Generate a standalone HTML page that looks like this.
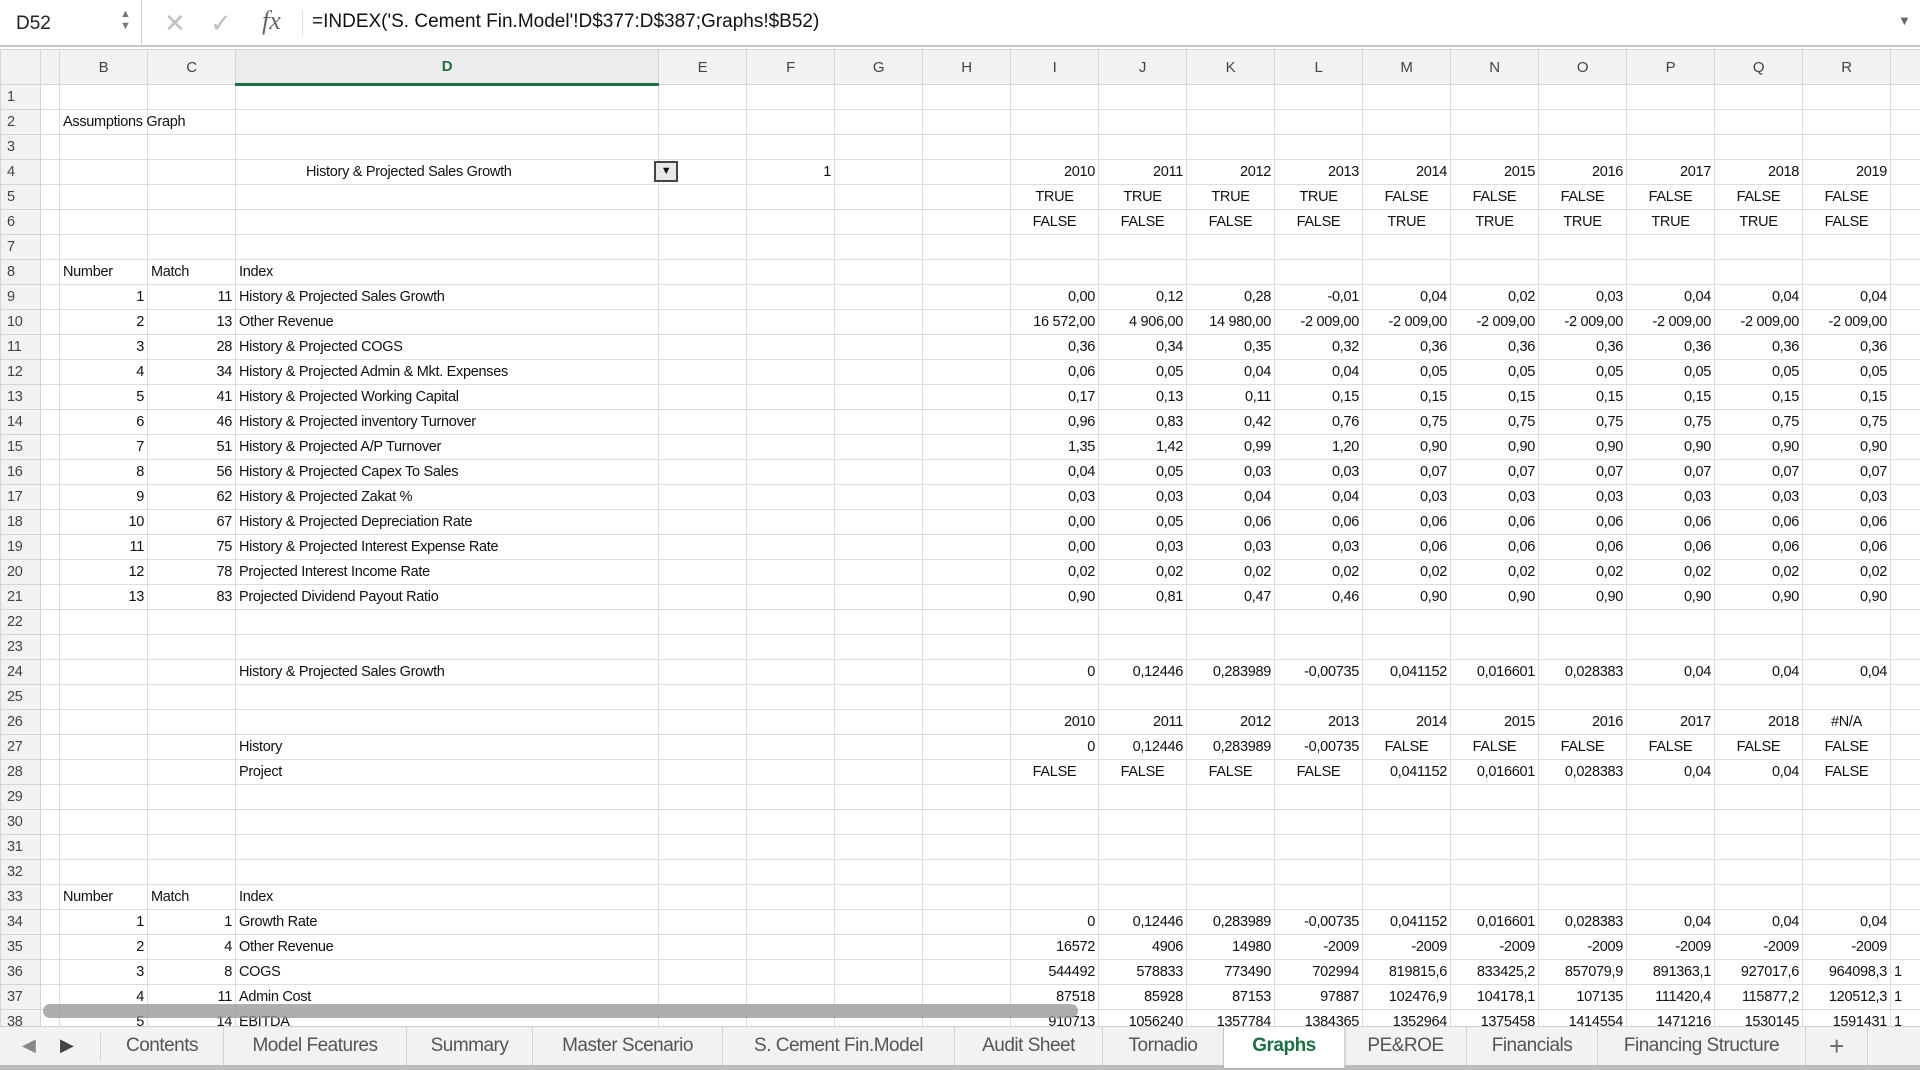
<!DOCTYPE html>
<html><head><meta charset="utf-8"><style>
*{box-sizing:border-box;margin:0;padding:0}
body{width:1920px;height:1070px;overflow:hidden;background:#fff;font-family:"Liberation Sans",sans-serif;position:relative}
#fb{position:absolute;left:0;top:0;width:1920px;height:47px;background:#fff;border-bottom:2px solid #c8c8c8}
#nb{position:absolute;left:0;top:0;width:142px;height:46px;border-right:1px solid #d0d0d0;font-size:19px;color:#222;padding:13px 0 0 16px}
#grid{position:absolute;left:0;top:49px;width:1920px;height:977px;overflow:hidden;background:#fff}
table{border-collapse:collapse;table-layout:fixed;width:1930px;font-size:14.5px;color:#111;letter-spacing:-0.3px}
td,th{height:25px;border:1px solid #dcdcdc;padding:0 3px;white-space:nowrap;overflow:visible;font-weight:normal;text-align:right}
thead th{height:35px;background:#f2f2f2;color:#444;text-align:center;font-size:15px;border-color:#d4d4d4}
tbody th{background:#f2f2f2;color:#444;text-align:left;padding-left:6px;border-color:#d4d4d4}
td.l{text-align:left}td.c{text-align:center}
thead th.sel{color:#1d7044;font-weight:bold;border-bottom:3px solid #1d7044;background:#ececec}
#tabs{position:absolute;left:0;top:1026px;width:1920px;height:44px;background:#f2f2f2;border-top:1px solid #cfcfcf;border-bottom:5px solid #bdbdbd}
.tab{position:absolute;top:0;height:38px;font-size:19px;color:#555;text-align:center;line-height:38px;border-right:1px solid #d3d3d3;letter-spacing:-0.5px}
.tab.act{background:#fff;color:#1d7044;font-weight:bold;height:41px;box-shadow:0 1px 2px #aaa}
#sb{position:absolute;left:43px;top:1004px;width:1035px;height:14px;border-radius:7px;background:#9a9a9a;opacity:.8}
</style></head><body>
<div id="fb">
<div id="nb">D52</div>
<div style="position:absolute;left:120px;top:8px;font-size:11px;color:#777;line-height:12px">▲<br>▼</div>
<div style="position:absolute;left:164px;top:8px;font-size:26px;color:#c0c0c0">✕</div>
<div style="position:absolute;left:210px;top:8px;font-size:26px;color:#c0c0c0">✓</div>
<div style="position:absolute;left:262px;top:6px;font-size:26px;color:#666;font-family:'Liberation Serif',serif;font-style:italic">fx</div>
<div style="position:absolute;left:302px;top:10px;height:26px;border-left:1px solid #ddd"></div>
<div style="position:absolute;left:312px;top:11px;font-size:19px;color:#111">=INDEX('S. Cement Fin.Model'!D$377:D$387;Graphs!$B52)</div>
<div style="position:absolute;left:1898px;top:13px;font-size:13px;color:#666">▼</div>
</div>
<div id="grid">
<table>
<colgroup><col style="width:40px"><col style="width:19px"><col style="width:88px"><col style="width:88px"><col style="width:423px"><col style="width:88px"><col style="width:88px"><col style="width:88px"><col style="width:88px"><col style="width:88px"><col style="width:88px"><col style="width:88px"><col style="width:88px"><col style="width:88px"><col style="width:88px"><col style="width:88px"><col style="width:88px"><col style="width:88px"><col style="width:88px"><col style="width:40px"></colgroup>
<thead><tr><th></th><th></th><th>B</th><th>C</th><th class="sel">D</th><th>E</th><th>F</th><th>G</th><th>H</th><th>I</th><th>J</th><th>K</th><th>L</th><th>M</th><th>N</th><th>O</th><th>P</th><th>Q</th><th>R</th><th></th></tr></thead>
<tbody>
<tr><th>1</th><td></td><td></td><td></td><td></td><td></td><td></td><td></td><td></td><td></td><td></td><td></td><td></td><td></td><td></td><td></td><td></td><td></td><td></td><td></td></tr>
<tr><th>2</th><td></td><td class="l">Assumptions Graph</td><td></td><td></td><td></td><td></td><td></td><td></td><td></td><td></td><td></td><td></td><td></td><td></td><td></td><td></td><td></td><td></td><td></td></tr>
<tr><th>3</th><td></td><td></td><td></td><td></td><td></td><td></td><td></td><td></td><td></td><td></td><td></td><td></td><td></td><td></td><td></td><td></td><td></td><td></td><td></td></tr>
<tr><th>4</th><td></td><td></td><td></td><td class="l" style="padding-left:70px;position:relative">History &amp; Projected Sales Growth<span style="position:absolute;left:418px;top:1px;width:24px;height:21px;border:2px solid #444;background:#e8e8e8;font-size:11px;text-align:center;line-height:17px">▼</span></td><td></td><td>1</td><td></td><td></td><td>2010</td><td>2011</td><td>2012</td><td>2013</td><td>2014</td><td>2015</td><td>2016</td><td>2017</td><td>2018</td><td>2019</td><td></td></tr>
<tr><th>5</th><td></td><td></td><td></td><td></td><td></td><td></td><td></td><td></td><td class="c">TRUE</td><td class="c">TRUE</td><td class="c">TRUE</td><td class="c">TRUE</td><td class="c">FALSE</td><td class="c">FALSE</td><td class="c">FALSE</td><td class="c">FALSE</td><td class="c">FALSE</td><td class="c">FALSE</td><td></td></tr>
<tr><th>6</th><td></td><td></td><td></td><td></td><td></td><td></td><td></td><td></td><td class="c">FALSE</td><td class="c">FALSE</td><td class="c">FALSE</td><td class="c">FALSE</td><td class="c">TRUE</td><td class="c">TRUE</td><td class="c">TRUE</td><td class="c">TRUE</td><td class="c">TRUE</td><td class="c">FALSE</td><td></td></tr>
<tr><th>7</th><td></td><td></td><td></td><td></td><td></td><td></td><td></td><td></td><td></td><td></td><td></td><td></td><td></td><td></td><td></td><td></td><td></td><td></td><td></td></tr>
<tr><th>8</th><td></td><td class="l">Number</td><td class="l">Match</td><td class="l">Index</td><td></td><td></td><td></td><td></td><td></td><td></td><td></td><td></td><td></td><td></td><td></td><td></td><td></td><td></td><td></td></tr>
<tr><th>9</th><td></td><td>1</td><td>11</td><td class="l">History &amp; Projected Sales Growth</td><td></td><td></td><td></td><td></td><td>0,00</td><td>0,12</td><td>0,28</td><td>-0,01</td><td>0,04</td><td>0,02</td><td>0,03</td><td>0,04</td><td>0,04</td><td>0,04</td><td></td></tr>
<tr><th>10</th><td></td><td>2</td><td>13</td><td class="l">Other Revenue</td><td></td><td></td><td></td><td></td><td>16 572,00</td><td>4 906,00</td><td>14 980,00</td><td>-2 009,00</td><td>-2 009,00</td><td>-2 009,00</td><td>-2 009,00</td><td>-2 009,00</td><td>-2 009,00</td><td>-2 009,00</td><td></td></tr>
<tr><th>11</th><td></td><td>3</td><td>28</td><td class="l">History &amp; Projected COGS</td><td></td><td></td><td></td><td></td><td>0,36</td><td>0,34</td><td>0,35</td><td>0,32</td><td>0,36</td><td>0,36</td><td>0,36</td><td>0,36</td><td>0,36</td><td>0,36</td><td></td></tr>
<tr><th>12</th><td></td><td>4</td><td>34</td><td class="l">History &amp; Projected Admin &amp; Mkt. Expenses</td><td></td><td></td><td></td><td></td><td>0,06</td><td>0,05</td><td>0,04</td><td>0,04</td><td>0,05</td><td>0,05</td><td>0,05</td><td>0,05</td><td>0,05</td><td>0,05</td><td></td></tr>
<tr><th>13</th><td></td><td>5</td><td>41</td><td class="l">History &amp; Projected Working Capital</td><td></td><td></td><td></td><td></td><td>0,17</td><td>0,13</td><td>0,11</td><td>0,15</td><td>0,15</td><td>0,15</td><td>0,15</td><td>0,15</td><td>0,15</td><td>0,15</td><td></td></tr>
<tr><th>14</th><td></td><td>6</td><td>46</td><td class="l">History &amp; Projected inventory Turnover</td><td></td><td></td><td></td><td></td><td>0,96</td><td>0,83</td><td>0,42</td><td>0,76</td><td>0,75</td><td>0,75</td><td>0,75</td><td>0,75</td><td>0,75</td><td>0,75</td><td></td></tr>
<tr><th>15</th><td></td><td>7</td><td>51</td><td class="l">History &amp; Projected A/P Turnover</td><td></td><td></td><td></td><td></td><td>1,35</td><td>1,42</td><td>0,99</td><td>1,20</td><td>0,90</td><td>0,90</td><td>0,90</td><td>0,90</td><td>0,90</td><td>0,90</td><td></td></tr>
<tr><th>16</th><td></td><td>8</td><td>56</td><td class="l">History &amp; Projected Capex To Sales</td><td></td><td></td><td></td><td></td><td>0,04</td><td>0,05</td><td>0,03</td><td>0,03</td><td>0,07</td><td>0,07</td><td>0,07</td><td>0,07</td><td>0,07</td><td>0,07</td><td></td></tr>
<tr><th>17</th><td></td><td>9</td><td>62</td><td class="l">History &amp; Projected Zakat %</td><td></td><td></td><td></td><td></td><td>0,03</td><td>0,03</td><td>0,04</td><td>0,04</td><td>0,03</td><td>0,03</td><td>0,03</td><td>0,03</td><td>0,03</td><td>0,03</td><td></td></tr>
<tr><th>18</th><td></td><td>10</td><td>67</td><td class="l">History &amp; Projected Depreciation Rate</td><td></td><td></td><td></td><td></td><td>0,00</td><td>0,05</td><td>0,06</td><td>0,06</td><td>0,06</td><td>0,06</td><td>0,06</td><td>0,06</td><td>0,06</td><td>0,06</td><td></td></tr>
<tr><th>19</th><td></td><td>11</td><td>75</td><td class="l">History &amp; Projected Interest Expense Rate</td><td></td><td></td><td></td><td></td><td>0,00</td><td>0,03</td><td>0,03</td><td>0,03</td><td>0,06</td><td>0,06</td><td>0,06</td><td>0,06</td><td>0,06</td><td>0,06</td><td></td></tr>
<tr><th>20</th><td></td><td>12</td><td>78</td><td class="l">Projected Interest Income Rate</td><td></td><td></td><td></td><td></td><td>0,02</td><td>0,02</td><td>0,02</td><td>0,02</td><td>0,02</td><td>0,02</td><td>0,02</td><td>0,02</td><td>0,02</td><td>0,02</td><td></td></tr>
<tr><th>21</th><td></td><td>13</td><td>83</td><td class="l">Projected Dividend Payout Ratio</td><td></td><td></td><td></td><td></td><td>0,90</td><td>0,81</td><td>0,47</td><td>0,46</td><td>0,90</td><td>0,90</td><td>0,90</td><td>0,90</td><td>0,90</td><td>0,90</td><td></td></tr>
<tr><th>22</th><td></td><td></td><td></td><td></td><td></td><td></td><td></td><td></td><td></td><td></td><td></td><td></td><td></td><td></td><td></td><td></td><td></td><td></td><td></td></tr>
<tr><th>23</th><td></td><td></td><td></td><td></td><td></td><td></td><td></td><td></td><td></td><td></td><td></td><td></td><td></td><td></td><td></td><td></td><td></td><td></td><td></td></tr>
<tr><th>24</th><td></td><td></td><td></td><td class="l">History &amp; Projected Sales Growth</td><td></td><td></td><td></td><td></td><td>0</td><td>0,12446</td><td>0,283989</td><td>-0,00735</td><td>0,041152</td><td>0,016601</td><td>0,028383</td><td>0,04</td><td>0,04</td><td>0,04</td><td></td></tr>
<tr><th>25</th><td></td><td></td><td></td><td></td><td></td><td></td><td></td><td></td><td></td><td></td><td></td><td></td><td></td><td></td><td></td><td></td><td></td><td></td><td></td></tr>
<tr><th>26</th><td></td><td></td><td></td><td></td><td></td><td></td><td></td><td></td><td>2010</td><td>2011</td><td>2012</td><td>2013</td><td>2014</td><td>2015</td><td>2016</td><td>2017</td><td>2018</td><td class="c">#N/A</td><td></td></tr>
<tr><th>27</th><td></td><td></td><td></td><td class="l">History</td><td></td><td></td><td></td><td></td><td>0</td><td>0,12446</td><td>0,283989</td><td>-0,00735</td><td class="c">FALSE</td><td class="c">FALSE</td><td class="c">FALSE</td><td class="c">FALSE</td><td class="c">FALSE</td><td class="c">FALSE</td><td></td></tr>
<tr><th>28</th><td></td><td></td><td></td><td class="l">Project</td><td></td><td></td><td></td><td></td><td class="c">FALSE</td><td class="c">FALSE</td><td class="c">FALSE</td><td class="c">FALSE</td><td>0,041152</td><td>0,016601</td><td>0,028383</td><td>0,04</td><td>0,04</td><td class="c">FALSE</td><td></td></tr>
<tr><th>29</th><td></td><td></td><td></td><td></td><td></td><td></td><td></td><td></td><td></td><td></td><td></td><td></td><td></td><td></td><td></td><td></td><td></td><td></td><td></td></tr>
<tr><th>30</th><td></td><td></td><td></td><td></td><td></td><td></td><td></td><td></td><td></td><td></td><td></td><td></td><td></td><td></td><td></td><td></td><td></td><td></td><td></td></tr>
<tr><th>31</th><td></td><td></td><td></td><td></td><td></td><td></td><td></td><td></td><td></td><td></td><td></td><td></td><td></td><td></td><td></td><td></td><td></td><td></td><td></td></tr>
<tr><th>32</th><td></td><td></td><td></td><td></td><td></td><td></td><td></td><td></td><td></td><td></td><td></td><td></td><td></td><td></td><td></td><td></td><td></td><td></td><td></td></tr>
<tr><th>33</th><td></td><td class="l">Number</td><td class="l">Match</td><td class="l">Index</td><td></td><td></td><td></td><td></td><td></td><td></td><td></td><td></td><td></td><td></td><td></td><td></td><td></td><td></td><td></td></tr>
<tr><th>34</th><td></td><td>1</td><td>1</td><td class="l">Growth Rate</td><td></td><td></td><td></td><td></td><td>0</td><td>0,12446</td><td>0,283989</td><td>-0,00735</td><td>0,041152</td><td>0,016601</td><td>0,028383</td><td>0,04</td><td>0,04</td><td>0,04</td><td></td></tr>
<tr><th>35</th><td></td><td>2</td><td>4</td><td class="l">Other Revenue</td><td></td><td></td><td></td><td></td><td>16572</td><td>4906</td><td>14980</td><td>-2009</td><td>-2009</td><td>-2009</td><td>-2009</td><td>-2009</td><td>-2009</td><td>-2009</td><td></td></tr>
<tr><th>36</th><td></td><td>3</td><td>8</td><td class="l">COGS</td><td></td><td></td><td></td><td></td><td>544492</td><td>578833</td><td>773490</td><td>702994</td><td>819815,6</td><td>833425,2</td><td>857079,9</td><td>891363,1</td><td>927017,6</td><td>964098,3</td><td class="l">1</td></tr>
<tr><th>37</th><td></td><td>4</td><td>11</td><td class="l">Admin Cost</td><td></td><td></td><td></td><td></td><td>87518</td><td>85928</td><td>87153</td><td>97887</td><td>102476,9</td><td>104178,1</td><td>107135</td><td>111420,4</td><td>115877,2</td><td>120512,3</td><td class="l">1</td></tr>
<tr><th>38</th><td></td><td>5</td><td>14</td><td class="l">EBITDA</td><td></td><td></td><td></td><td></td><td>910713</td><td>1056240</td><td>1357784</td><td>1384365</td><td>1352964</td><td>1375458</td><td>1414554</td><td>1471216</td><td>1530145</td><td>1591431</td><td class="l">1</td></tr>
</tbody></table>
</div>
<div id="sb"></div>
<div id="tabs">
<div style="position:absolute;left:22px;top:8px;font-size:18px;color:#888">◀</div>
<div style="position:absolute;left:60px;top:8px;font-size:18px;color:#444">▶</div>
<div style="position:absolute;left:100px;top:6px;height:28px;border-left:1px solid #d3d3d3"></div>
<div class="tab" style="left:101px;width:123px">Contents</div>
<div class="tab" style="left:224px;width:183px">Model Features</div>
<div class="tab" style="left:407px;width:126px">Summary</div>
<div class="tab" style="left:533px;width:190px">Master Scenario</div>
<div class="tab" style="left:723px;width:232px">S. Cement Fin.Model</div>
<div class="tab" style="left:955px;width:148px">Audit Sheet</div>
<div class="tab" style="left:1103px;width:121px">Tornadio</div>
<div class="tab act" style="left:1224px;width:121px">Graphs</div>
<div class="tab" style="left:1345px;width:122px">PE&amp;ROE</div>
<div class="tab" style="left:1467px;width:131px">Financials</div>
<div class="tab" style="left:1598px;width:208px">Financing Structure</div>
<div class="tab" style="left:1806px;width:62px;font-size:26px;color:#666">+</div>
</div>
</body></html>
